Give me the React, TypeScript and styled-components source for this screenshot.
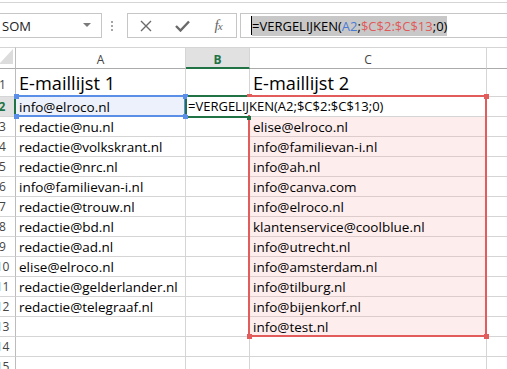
import React from "react";
import styled, { createGlobalStyle, css } from "styled-components";

const GlobalStyle = createGlobalStyle`
  *, *::before, *::after { box-sizing: border-box; }
  html, body { margin: 0; padding: 0; background: #fff; overflow: hidden; }
  body { font-family: "Open Sans", "Noto Sans", sans-serif; color: #000; }
`;

const GRID = "#d5d5d5";
const GREEN = "#217346";
const BLUE = "#5b8ee6";
const RED = "#e25c5c";

const Window = styled.div`
  width: 507px;
  height: 369px;
  overflow: hidden;
  position: relative;
  background: #fff;
`;

// formula bar
const FormulaBar = styled.div`
  margin-top: 2px;
  border-top: 1px solid ${GRID};
  padding: 10px 0 9px;
  height: 45px;
  display: flex;
  align-items: center;
`;

const NameBox = styled.div`
  margin-left: -1px;
  width: 103px;
  height: 25px;
  border: 1px solid #c6c6c6;
  display: flex;
  align-items: center;
  justify-content: space-between;
  padding: 0 10px 0 2px;
  font-size: 13px;
  color: #222;
`;

const Dots = styled.div`
  width: 25px;
  padding-right: 5px;
  display: flex;
  flex-direction: column;
  align-items: center;
  gap: 2px;

  span {
    width: 2px;
    height: 2px;
    background: #a6a6a6;
  }
`;

const ButtonBox = styled.div`
  width: 110px;
  height: 25px;
  border: 1px solid #c6c6c6;
  display: flex;
`;

const BarButton = styled.div`
  width: 36px;
  height: 100%;
  display: flex;
  align-items: center;
  justify-content: center;
  color: #666;
`;

const Fx = styled.span`
  font-family: "Liberation Serif", serif;
  font-style: italic;
  font-size: 15px;
  color: #666;
  letter-spacing: -1px;

  small {
    font-size: 11px;
  }
`;

const FormulaInput = styled.div`
  flex: 1;
  margin-left: 3px;
  margin-right: -5px;
  height: 25px;
  border: 1px solid #c6c6c6;
  display: flex;
  align-items: center;
  padding-left: 10px;
  font-size: 13px;
  white-space: nowrap;
`;

const Caret = styled.span`
  width: 1px;
  height: 19px;
  background: #000;
`;

const Selected = styled.span`
  display: inline-block;
  line-height: 20px;
  background: #c8c8c8;
`;

const Ref = styled.span<{ $color: string }>`
  color: ${(p) => p.$color};
`;

// sheet
const Sheet = styled.div`
  display: grid;
  grid-template-columns: 16px 170px 64px 237px 40px;
  grid-template-rows: 22px 28px repeat(14, 20px);
  position: relative;
`;

const Corner = styled.div`
  border-top: 1px solid ${GRID};
  border-right: 1px solid #bcbcbc;
  border-bottom: 1px solid #ababab;
`;

const ColHeader = styled.div<{ $active?: boolean }>`
  border-top: 1px solid ${GRID};
  border-right: 1px solid ${GRID};
  border-bottom: 1px solid #ababab;
  display: flex;
  align-items: center;
  justify-content: center;
  padding-top: 2px;
  font-size: 12px;
  color: #444;

  ${(p) =>
    p.$active &&
    css`
      background: #e1e1e1;
      color: ${GREEN};
      font-weight: 700;
      border-bottom: 2px solid ${GREEN};
      padding-top: 3px;
    `}
`;

const RowHeader = styled.div<{ $active?: boolean; $tall?: boolean }>`
  border-right: 1px solid #bcbcbc;
  border-bottom: 1px solid ${GRID};
  display: flex;
  align-items: flex-end;
  justify-content: center;
  padding-right: 10px;
  padding-bottom: ${(p) => (p.$tall ? "2px" : "0")};
  font-size: 12px;
  line-height: 18px;
  color: #444;
  white-space: nowrap;

  ${(p) =>
    p.$active &&
    css`
      background: #e1e1e1;
      color: ${GREEN};
      font-weight: 700;
      border-right: 2px solid ${GREEN};
    `}
`;

const Cell = styled.div<{ $fill?: string; $line?: string; $tall?: boolean }>`
  border-right: 1px solid ${(p) => p.$line ?? GRID};
  border-bottom: 1px solid ${(p) => p.$line ?? GRID};
  background: ${(p) => p.$fill ?? "transparent"};
  display: flex;
  align-items: flex-end;
  padding-left: 3px;
  font-size: 13.5px;
  line-height: 18px;
  white-space: nowrap;
  min-width: 0;

  ${(p) =>
    p.$tall &&
    css`
      font-size: 18.2px;
      line-height: 22px;
      padding-bottom: 2px;
    `}
`;

const RangeBox = styled.div<{
  $color: string;
  $left: number;
  $top: number;
  $w: number;
  $h: number;
  $noLeft?: boolean;
}>`
  position: absolute;
  left: ${(p) => p.$left}px;
  top: ${(p) => p.$top}px;
  width: ${(p) => p.$w}px;
  height: ${(p) => p.$h}px;
  border: 2px solid ${(p) => p.$color};
  ${(p) => p.$noLeft && "border-left: none;"}
  pointer-events: none;
`;

const Handle = styled.div<{ $color: string; $x: number; $y: number; $size?: number }>`
  position: absolute;
  width: ${(p) => p.$size ?? 5}px;
  height: ${(p) => p.$size ?? 5}px;
  left: ${(p) => p.$x - (p.$size ?? 5) / 2}px;
  top: ${(p) => p.$y - (p.$size ?? 5) / 2}px;
  background: ${(p) => p.$color};
`;

// in-cell editor, lies over the reference boxes
const CellEditor = styled.div`
  position: absolute;
  left: 187px;
  top: 50px;
  height: 18px;
  padding: 0 4px 0 1px;
  background: #fff;
  font-size: 13px;
  line-height: 18px;
  white-space: nowrap;
`;

const colA: Record<number, string> = {
  1: "E-maillijst 1",
  2: "info@elroco.nl",
  3: "redactie@nu.nl",
  4: "redactie@volkskrant.nl",
  5: "redactie@nrc.nl",
  6: "info@familievan-i.nl",
  7: "redactie@trouw.nl",
  8: "redactie@bd.nl",
  9: "redactie@ad.nl",
  10: "elise@elroco.nl",
  11: "redactie@gelderlander.nl",
  12: "redactie@telegraaf.nl",
};

const colC: Record<number, string> = {
  1: "E-maillijst 2",
  3: "elise@elroco.nl",
  4: "info@familievan-i.nl",
  5: "info@ah.nl",
  6: "info@canva.com",
  7: "info@elroco.nl",
  8: "klantenservice@coolblue.nl",
  9: "info@utrecht.nl",
  10: "info@amsterdam.nl",
  11: "info@tilburg.nl",
  12: "info@bijenkorf.nl",
  13: "info@test.nl",
};

const FORMULA = "=VERGELIJKEN(A2;$C$2:$C$13;0)";
const rows = Array.from({ length: 15 }, (_, i) => i + 1);

export default function App() {
  return (
    <Window>
      <GlobalStyle />
      <FormulaBar>
        <NameBox>
          SOM
          <svg width="8" height="5" viewBox="0 0 8 5">
            <polygon points="0,0 8,0 4,4" fill="#7a7a7a" />
          </svg>
        </NameBox>
        <Dots>
          <span />
          <span />
          <span />
        </Dots>
        <ButtonBox>
          <BarButton>
            <svg width="12" height="12" viewBox="0 0 12 12">
              <path d="M1 1L11 11M11 1L1 11" stroke="#6a6a6a" strokeWidth="1.4" fill="none" />
            </svg>
          </BarButton>
          <BarButton>
            <svg width="15" height="12" viewBox="0 0 15 12">
              <path d="M1 6L5.5 10.5L14 1.5" stroke="#6a6a6a" strokeWidth="2.4" fill="none" />
            </svg>
          </BarButton>
          <BarButton>
            <Fx>
              f<small>x</small>
            </Fx>
          </BarButton>
        </ButtonBox>
        <FormulaInput>
          <Caret />
          <Selected>
            =VERGELIJKEN(<Ref $color="#4a7bd4">A2</Ref>;<Ref $color="#e05a5a">$C$2:$C$13</Ref>;0)
          </Selected>
        </FormulaInput>
      </FormulaBar>

      <Sheet>
        <Corner>
          <svg width="15" height="20" viewBox="0 0 15 20">
            <polygon points="13,1 13,16 -1,16" fill="#dcdcdc" />
          </svg>
        </Corner>
        <ColHeader>A</ColHeader>
        <ColHeader $active>B</ColHeader>
        <ColHeader>C</ColHeader>
        <ColHeader />

        {rows.map((r) => {
          const inC = r >= 3 && r <= 13;
          return (
            <React.Fragment key={r}>
              <RowHeader $active={r === 2} $tall={r === 1}>
                {r}
              </RowHeader>
              <Cell $tall={r === 1} $fill={r === 2 ? "#ecf1fb" : undefined}>
                {colA[r]}
              </Cell>
              <Cell $tall={r === 1} />
              <Cell
                $tall={r === 1}
                $fill={inC ? "#fdeded" : undefined}
                $line={inC ? "#dccccc" : undefined}
              >
                {colC[r]}
              </Cell>
              <Cell />
            </React.Fragment>
          );
        })}

        <RangeBox $color={BLUE} $left={16} $top={48} $w={170} $h={22} $noLeft />
        <RangeBox $color={GREEN} $left={185} $top={48} $w={65} $h={23} />
        <Handle $color={BLUE} $x={16} $y={49} />
        <Handle $color={BLUE} $x={185.5} $y={49} />
        <Handle $color={BLUE} $x={16} $y={69} />
        <Handle $color={BLUE} $x={185.5} $y={69} />
        <RangeBox $color={RED} $left={248} $top={48} $w={239} $h={242} />
        <Handle $color={RED} $x={249.5} $y={49} />
        <Handle $color={RED} $x={486} $y={49} />
        <Handle $color={RED} $x={249.5} $y={289} />
        <Handle $color={RED} $x={486} $y={289} />
        <CellEditor>{FORMULA}</CellEditor>
        <Handle $color={GREEN} $x={249} $y={71} $size={4} />
      </Sheet>
    </Window>
  );
}
